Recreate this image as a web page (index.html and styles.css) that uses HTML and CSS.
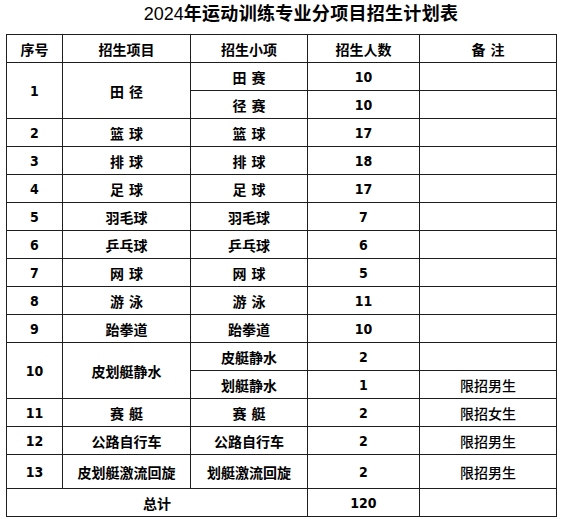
FILE: index.html
```html
<!DOCTYPE html>
<html lang="zh-CN">
<head>
<meta charset="utf-8">
<title>2024年运动训练专业分项目招生计划表</title>
<link rel="stylesheet" href="styles.css">
</head>
<body>
<div class="page">
  <h1 class="title"><span class="year">2024</span>年运动训练专业分项目招生计划表</h1>
  <table class="plan">
    <colgroup>
      <col class="c-no">
      <col class="c-item">
      <col class="c-sub">
      <col class="c-count">
      <col class="c-note">
    </colgroup>
    <thead>
      <tr><th>序号</th><th>招生项目</th><th>招生小项</th><th>招生人数</th><th>备 注</th></tr>
    </thead>
    <tbody>
      <tr><td class="num" rowspan="2">1</td><td rowspan="2">田 径</td><td>田 赛</td><td class="num">10</td><td class="note"></td></tr>
      <tr><td>径 赛</td><td class="num">10</td><td class="note"></td></tr>
      <tr><td class="num">2</td><td>篮 球</td><td>篮 球</td><td class="num">17</td><td class="note"></td></tr>
      <tr><td class="num">3</td><td>排 球</td><td>排 球</td><td class="num">18</td><td class="note"></td></tr>
      <tr><td class="num">4</td><td>足 球</td><td>足 球</td><td class="num">17</td><td class="note"></td></tr>
      <tr><td class="num">5</td><td>羽毛球</td><td>羽毛球</td><td class="num">7</td><td class="note"></td></tr>
      <tr><td class="num">6</td><td>乒乓球</td><td>乒乓球</td><td class="num">6</td><td class="note"></td></tr>
      <tr><td class="num">7</td><td>网 球</td><td>网 球</td><td class="num">5</td><td class="note"></td></tr>
      <tr><td class="num">8</td><td>游 泳</td><td>游 泳</td><td class="num">11</td><td class="note"></td></tr>
      <tr><td class="num">9</td><td>跆拳道</td><td>跆拳道</td><td class="num">10</td><td class="note"></td></tr>
      <tr><td class="num" rowspan="2">10</td><td rowspan="2">皮划艇静水</td><td>皮艇静水</td><td class="num">2</td><td class="note"></td></tr>
      <tr><td>划艇静水</td><td class="num">1</td><td class="note">限招男生</td></tr>
      <tr><td class="num">11</td><td>赛 艇</td><td>赛 艇</td><td class="num">2</td><td class="note">限招女生</td></tr>
      <tr><td class="num">12</td><td>公路自行车</td><td>公路自行车</td><td class="num">2</td><td class="note">限招男生</td></tr>
      <tr class="tall"><td class="num">13</td><td>皮划艇激流回旋</td><td>划艇激流回旋</td><td class="num">2</td><td class="note">限招男生</td></tr>
      <tr><td colspan="3">总计</td><td class="num">120</td><td class="note"></td></tr>
    </tbody>
  </table>
</div>
</body>
</html>
```

FILE: styles.css
```css
html, body {
  margin: 0;
  padding: 0;
  background: #ffffff;
}

.page {
  width: 564px;
  padding-top: 0;
  font-family: "Noto Sans CJK SC", "Noto Sans", sans-serif;
  color: #000;
}

.title {
  margin: 0;
  padding-left: 38px;
  height: 34px;
  line-height: 24px;
  text-align: center;
  font-size: 18px;
  font-weight: 700;
  letter-spacing: 0.3px;
}

.title .year {
  font-family: "Liberation Sans", sans-serif;
  font-weight: 400;
  letter-spacing: 0;
}

.plan {
  margin-left: 6px;
  width: 551px;
  table-layout: fixed;
  border-collapse: collapse;
  font-size: 14px;
}

.c-no { width: 56px; }
.c-item { width: 128px; }
.c-sub { width: 117px; }
.c-count { width: 112px; }
.c-note { width: 137px; }

.plan th,
.plan td {
  border: 1px solid #1e1e1e;
  height: 27px;
  padding: 0;
  text-align: center;
  vertical-align: middle;
  font-weight: 700;
  line-height: 18px;
  white-space: nowrap;
  word-spacing: 2px;
}

.plan .tall td {
  height: 33px;
}

.plan td.num {
  font-family: "DejaVu Sans Condensed", "DejaVu Sans", sans-serif;
  font-stretch: condensed;
  font-size: 14px;
}

.plan td.note {
  font-weight: 500;
}
```
